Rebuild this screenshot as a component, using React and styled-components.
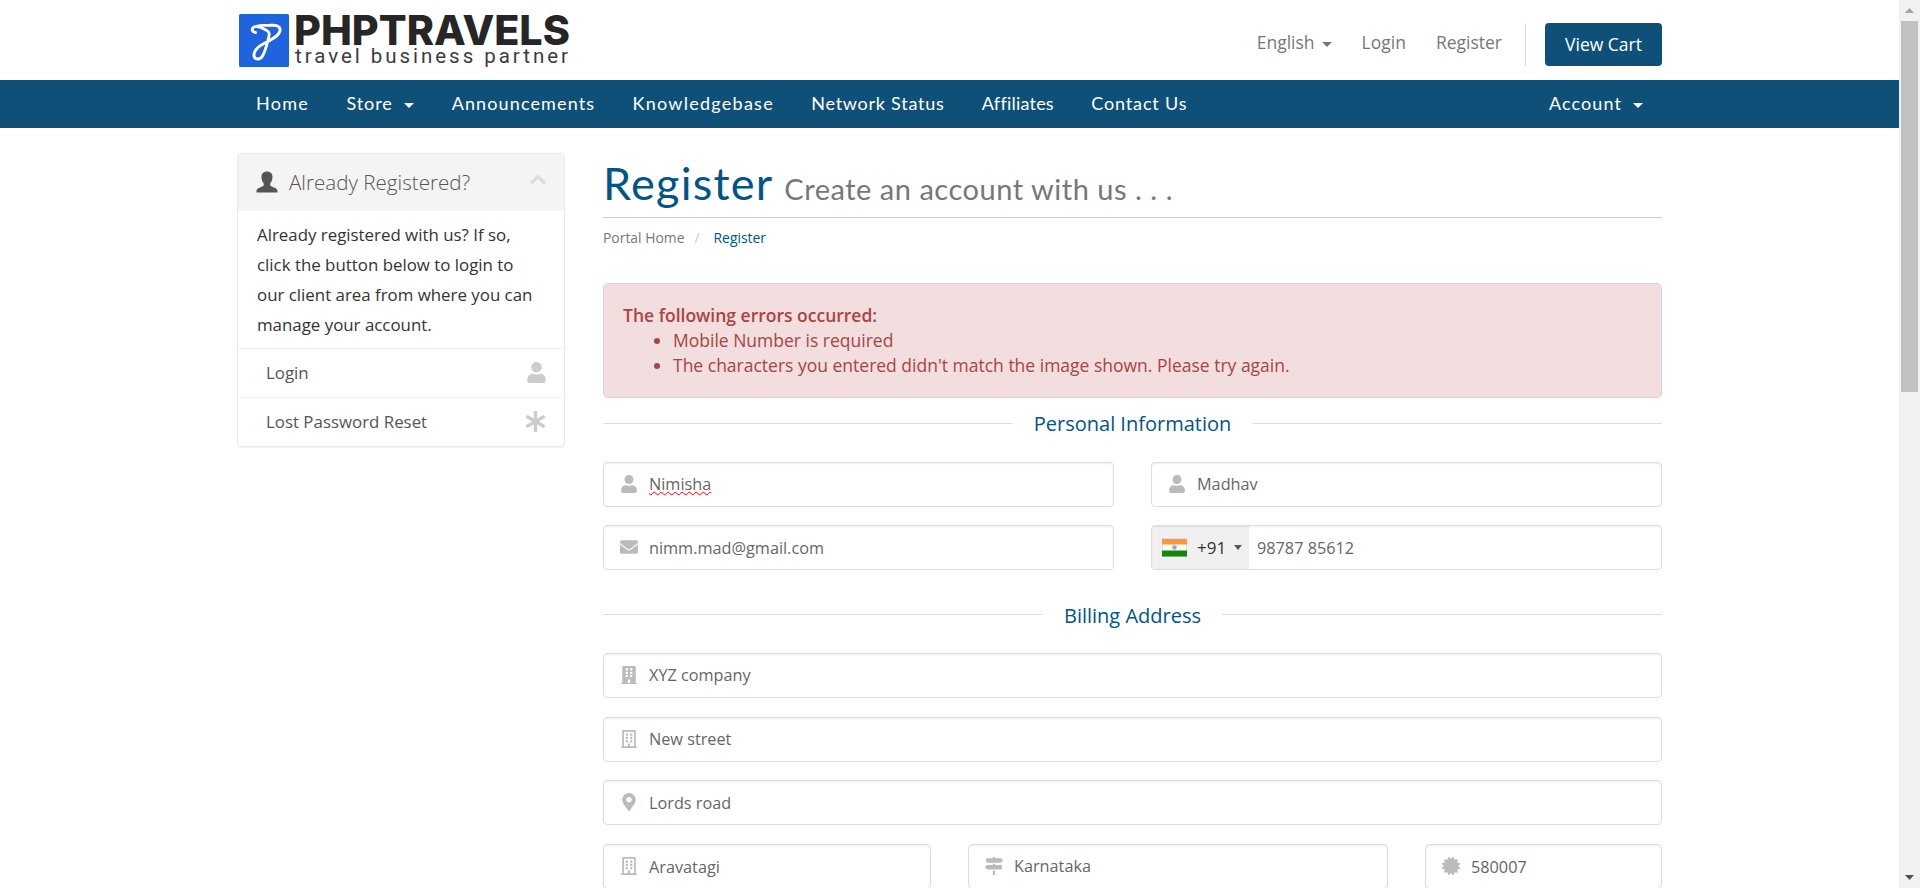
import React from "react";
import styled, { createGlobalStyle } from "styled-components";
import {
  FaUser, FaAsterisk, FaEnvelope, FaBuilding, FaRegBuilding,
  FaMapMarkerAlt, FaMapSigns, FaCertificate,
} from "react-icons/fa";

const Global = createGlobalStyle`
  *, *::before, *::after { box-sizing: border-box; }
  body { margin: 0; background: #fff; overflow: hidden; color: #333;
    font-family: "Open Sans", sans-serif; font-size: 17.5px; line-height: 25px; }
`;

const Window = styled.div`display: flex; width: 100%; height: 888px; overflow: hidden;`;
const Page = styled.div`flex: 1; min-width: 0;`;
const Container = styled.div`width: 1425px; margin: 0 0 0 237px;`;

const TopBar = styled(Container)`display: flex; height: 80px; justify-content: space-between;`;
const LogoArt = styled.svg`display: block; margin: 13px 0 0 2px; overflow: visible;`;
const TopNav = styled.div`display: flex; align-items: center; height: 43px; margin-top: 23px; color: #777;`;
const TopLink = styled.a`display: flex; align-items: center; margin-right: ${p => p.$gap}px; padding-bottom: 4px;`;
const Caret = styled.i`
  width: 0; height: 0; margin-left: ${p => p.$gap}px; margin-top: 3px;
  border: 5px solid transparent; border-top-color: currentColor; border-bottom: 0;
`;
const CartButton = styled.button`
  width: 117px; height: 43px; margin-left: 19px; padding: 0; border: 0; border-radius: 4px;
  background: #0f5078; color: #fff; font: 400 17.5px/43px "Open Sans", sans-serif;
`;
const Rule = styled.div`width: 1px; height: 43px; background: #ddd;`;

const NavBar = styled.nav`height: 48px; background: #0f5078; color: #fff; font: 400 18px/47px Lato, sans-serif;`;
const NavRow = styled(Container)`display: flex; padding: 0 19px; gap: 37.4px;`;
const NavItem = styled.a`
  display: flex; align-items: center; height: 47px; white-space: nowrap; letter-spacing: ${p => p.$ls || 0}px;
  margin-left: ${p => (p.$end ? "auto" : "0")};
`;

const Columns = styled(Container)`display: flex; gap: 38px; align-items: flex-start; padding-top: 25px;`;
const Panel = styled.aside`
  width: 328px; border: 1px solid #eaeaea; border-radius: 4px; overflow: hidden;
  box-shadow: 0 1px 1px rgba(0,0,0,.05);
`;
const PanelHead = styled.div`
  display: flex; align-items: center; height: 57px; padding: 0 18px 1px; background: #f4f4f4;
  color: #555; font-weight: 300; font-size: 20.6px;
`;
const PanelTitle = styled.span`margin-left: 11px;`;
const Collapse = styled.svg`margin: 0 0 6px auto;`;
const PanelText = styled.p`margin: 0; padding: 9px 19px 8px; height: 137px; font-size: 16.87px; line-height: 30px; white-space: nowrap;`;
const PanelLink = styled.a`
  display: flex; justify-content: space-between; align-items: center; height: 49px; padding: 0 ${p => p.$right}px 2px 28px;
  border-top: 1px solid #f1f1f1; color: #555; font-size: 16.87px; svg { color: #ccc; }
`;

const Main = styled.main`width: 1059px;`;
const Title = styled.h1`
  display: flex; align-items: baseline; margin: 0; height: 65px; padding: 5px 0 0; border-bottom: 1px solid #ccc;
  color: #058; font: 400 45px/50px Lato, sans-serif; letter-spacing: 1.25px;
`;
const Subtitle = styled.small`margin-left: 11px; color: #777; font-size: 29px; letter-spacing: .52px;`;
const Crumbs = styled.div`display: flex; height: 65px; padding-top: 7px; font-size: 13.9px; color: #777;`;
const Slash = styled.span`margin: 0 14px 0 10px; color: #ccc;`;
const Current = styled.span`color: #058;`;
const Alert = styled.div`
  height: 115px; padding: 19px; border: 1px solid #ebccd1; border-radius: 5px; background: #f2dede; color: #a94442;
  ul { margin: 0; padding-left: 50px; }
`;
const Strong = styled.b`font-weight: 600;`;
const Divider = styled.div`
  display: flex; align-items: center; gap: 21px; margin-top: ${p => p.$top}px; height: 30px;
  color: #058; font-size: 20px;
  &::before, &::after { content: ""; flex: 1; height: 1px; margin-bottom: ${p => p.$lift || 0}px; background: #ddd; }
`;
const FieldRow = styled.div`display: grid; grid-template-columns: ${p => p.$cols || "1fr"}; gap: 37px; margin-top: ${p => p.$top}px;`;
const Field = styled.label`
  display: flex; align-items: center; height: 45px; border: 1px solid #ddd; border-radius: 4px; overflow: hidden;
  color: #666; font-size: 16.25px; box-shadow: inset 0 1px 2px rgba(0,0,0,.07);
`;
const Value = styled.span`padding-top: ${p => (p.$low ? 2 : 0)}px;`;
const IconSlot = styled.span`display: flex; justify-content: center; width: 20px; margin: 0 10px 2px 15px; color: #bbb; font-size: 18px;`;
const Misspelt = styled.span`text-decoration: underline wavy red 1px; text-underline-offset: 1px;`;
const Dial = styled.span`
  display: flex; align-items: center; width: 97px; height: 43px; padding-left: 10px; margin-right: 8px;
  background: #f0f0f0; color: #333; box-shadow: inset 0 1px 2px rgba(0,0,0,.07);
`;
const DialCode = styled.span`margin-left: 10px; font-size: 17px;`;
const DialArrow = styled.i`margin-left: 8px; border: 4px solid transparent; border-top: 5px solid #555; border-bottom: 0;`;

const Scroll = styled.div`display: flex; flex-direction: column; align-items: center; width: 21px; height: 888px; background: #f1f1f1;`;
const ScrollEnd = styled.div`display: flex; align-items: center; justify-content: center; width: 21px; height: 21px;`;
const Thumb = styled.div`width: 17px; height: 371px; margin-bottom: auto; background: #c1c1c1;`;

const Logo = () => (
  <LogoArt width="333" height="60" viewBox="0 0 333 60">
    <rect y="1" width="50" height="53" rx="1.5" fill="#1f63de" />
    <path
      d="M16.500 19.500C13 19 12 15.500 15 14C19 12 23 15 27 17C31 19 30.500 21 29.500 25C28 31 26.500 38 23.500 43C20.500 47.800 14.500 46.500 15 41.500C15.500 36.500 20 33 25 30.500C31 27.500 40 23.500 41 17.500C41.500 13 37 11.800 32 12.300C27 12.800 22 11.500 17 13.500"
      fill="none" stroke="#fff" strokeWidth="2.900" strokeLinecap="round"
    />
    <text x="55" y="32" textLength="276" lengthAdjust="spacingAndGlyphs" fill="#262626" fontFamily="Inter" fontWeight="800" fontSize="41">PHPTRAVELS</text>
    <text x="56" y="50" textLength="273" fill="#3c3c3c" fontFamily="Roboto" fontSize="20.500">travel business partner</text>
  </LogoArt>
);

const Flag = () => (
  <svg width="25" height="19" viewBox="0 0 25 19">
    <rect x=".5" y=".5" width="24" height="18" fill="#fff" stroke="#ddd" />
    <path fill="#ff9933" d="M0 1h25v5.500h-25z" />
    <path fill="#128807" d="M0 12.500h25v6h-25z" />
    <circle cx="12.500" cy="9.500" r="2.200" fill="#9c9cd2" />
  </svg>
);

const Silhouette = () => (
  <svg width="22" height="22" viewBox="0 0 22 22" fill="currentColor">
    <path d="M11 0.500C14.500 0.500 16.500 2.800 16.500 6C16.500 9 15.500 11 14.200 12.500V14.300C14.500 16 21.500 16.500 21.500 20V21.500H0.500V20C0.500 16.500 7.500 16 7.800 14.300V12.500C6.500 11 5.500 9 5.500 6C5.500 2.800 7.500 0.500 11 0.500Z" />
  </svg>
);

const Input = ({ icon: Icon, low, children }) => (
  <Field><IconSlot><Icon /></IconSlot><Value $low={low}>{children}</Value></Field>
);

export default function App() {
  return (
    <Window>
      <Global />
      <Page>
        <TopBar>
          <Logo />
          <TopNav>
            <TopLink $gap={30}>English<Caret $gap={7} /></TopLink>
            <TopLink $gap={30}>Login</TopLink>
            <TopLink $gap={23}>Register</TopLink>
            <Rule />
            <CartButton>View Cart</CartButton>
          </TopNav>
        </TopBar>
        <NavBar>
          <NavRow>
            <NavItem $ls={1.25}>Home</NavItem>
            <NavItem $ls={0.95}>Store<Caret $gap={11.5} /></NavItem>
            <NavItem $ls={1.12}>Announcements</NavItem>
            <NavItem $ls={1.25}>Knowledgebase</NavItem>
            <NavItem $ls={0.74}>Network Status</NavItem>
            <NavItem $ls={0.22}>Affiliates</NavItem>
            <NavItem $ls={0.85}>Contact Us</NavItem>
            <NavItem $ls={1.1} $end>Account<Caret $gap={11} /></NavItem>
          </NavRow>
        </NavBar>
        <Columns>
          <Panel>
            <PanelHead>
              <Silhouette />
              <PanelTitle>Already Registered?</PanelTitle>
              <Collapse width="16" height="11" viewBox="0 0 16 11">
                <path d="M2 8.500L8 2.500L14 8.500" fill="none" stroke="#ddd" strokeWidth="3.200" strokeLinecap="round" />
              </Collapse>
            </PanelHead>
            <PanelText>
              Already registered with us? If so,<br />click the button below to login to<br />
              our client area from where you can<br />manage your account.
            </PanelText>
            <PanelLink $right={17}>Login<FaUser size={21} /></PanelLink>
            <PanelLink $right={18}>Lost Password Reset<FaAsterisk size={21} /></PanelLink>
          </Panel>
          <Main>
            <Title>Register<Subtitle>Create an account with us . . .</Subtitle></Title>
            <Crumbs>Portal Home<Slash>/</Slash><Current>Register</Current></Crumbs>
            <Alert>
              <Strong>The following errors occurred:</Strong>
              <ul>
                <li>Mobile Number is required</li>
                <li>The characters you entered didn't match the image shown. Please try again.</li>
              </ul>
            </Alert>
            <Divider $top={10}>Personal Information</Divider>
            <FieldRow $cols="1fr 1fr" $top={24}>
              <Input icon={FaUser}><Misspelt>Nimisha</Misspelt></Input>
              <Input icon={FaUser}>Madhav</Input>
            </FieldRow>
            <FieldRow $cols="1fr 1fr" $top={18}>
              <Input icon={FaEnvelope} low>nimm.mad@gmail.com</Input>
              <Field><Dial><Flag /><DialCode>+91</DialCode><DialArrow /></Dial><Value $low>98787 85612</Value></Field>
            </FieldRow>
            <Divider $top={30} $lift={2}>Billing Address</Divider>
            <FieldRow $top={23}><Input icon={FaBuilding}>XYZ company</Input></FieldRow>
            <FieldRow $top={19}><Input icon={FaRegBuilding}>New street</Input></FieldRow>
            <FieldRow $top={18}><Input icon={FaMapMarkerAlt} low>Lords road</Input></FieldRow>
            <FieldRow $cols="328px 420px 1fr" $top={19}>
              <Input icon={FaRegBuilding} low>Aravatagi</Input>
              <Input icon={FaMapSigns}>Karnataka</Input>
              <Input icon={FaCertificate} low>580007</Input>
            </FieldRow>
          </Main>
        </Columns>
      </Page>
      <Scroll>
        <ScrollEnd><svg width="9" height="5"><path d="M0 5L4.500 0L9 5Z" fill="#a3a3a3" /></svg></ScrollEnd>
        <Thumb />
        <ScrollEnd><svg width="9" height="5"><path d="M0 0H9L4.500 5Z" fill="#505050" /></svg></ScrollEnd>
      </Scroll>
    </Window>
  );
}
